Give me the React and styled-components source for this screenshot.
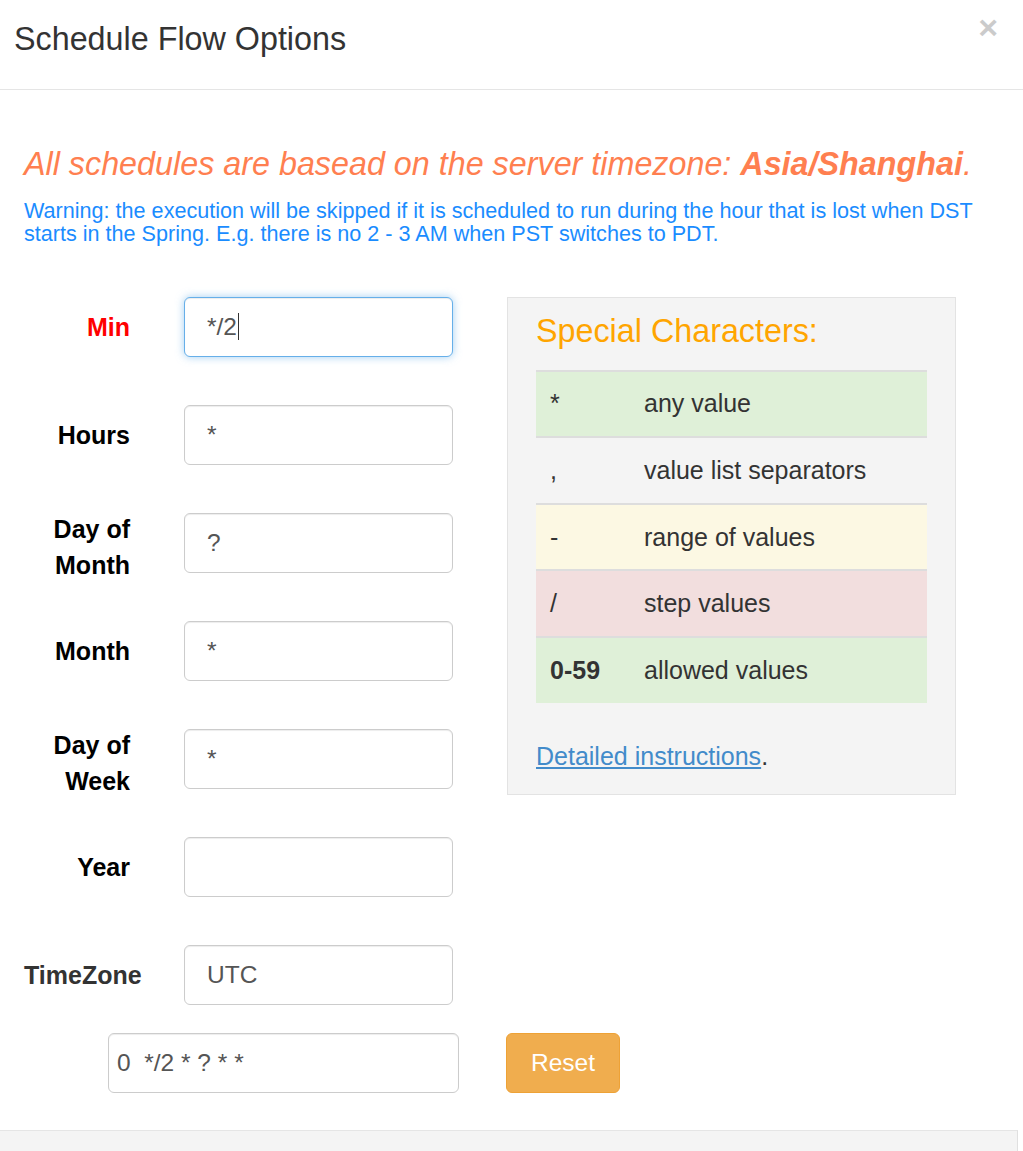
import React from "react";
import styled, { createGlobalStyle } from "styled-components";

const Global = createGlobalStyle`
  html, body { margin: 0; padding: 0; background: #fff; }
  body { font-family: "Liberation Sans", Arial, sans-serif; color: #333; }
  * { box-sizing: border-box; }
`;

const Modal = styled.div`
  width: 1023px;
  height: 1151px;
  background: #fff;
  overflow: hidden;
`;

const Header = styled.div`
  height: 90px;
  border-bottom: 1px solid #e5e5e5;
  display: flex;
  justify-content: space-between;
  align-items: flex-start;
  padding: 22px 25px 0 14px;
`;

const Title = styled.h4`
  margin: 0;
  font-size: 32.3px;
  line-height: 1.1;
  font-weight: 400;
  color: #333;
`;

const Close = styled.span`
  font-size: 34px;
  font-weight: 700;
  line-height: 1;
  color: #000;
  opacity: 0.2;
  margin-top: -12px;
`;

const Body = styled.div`
  padding: 57px 24px 0 24px;
`;

const Notice = styled.h4`
  margin: 0;
  font-size: 32.3px;
  line-height: 1.1;
  font-weight: 400;
  font-style: italic;
  color: #ff7f50;
  white-space: nowrap;
`;

const Warning = styled.p`
  margin: 16px 0 0 0;
  font-size: 21.6px;
  line-height: 1.1;
  color: #1a8cff;
  width: 960px;
`;

const Columns = styled.div`
  display: flex;
  align-items: flex-start;
  gap: 55px;
  margin-top: 51px;
`;

const FormCol = styled.div`
  display: flex;
  flex-direction: column;
  gap: 48px;
  width: 428px;
`;

const Row = styled.div`
  display: flex;
  align-items: center;
  gap: 54px;
  height: 60px;
`;

const Label = styled.label`
  width: 106px;
  flex: none;
  text-align: right;
  font-size: 25px;
  line-height: ${(p) => (p.$multi ? "36.5px" : "35px")};
  padding-top: ${(p) => (p.$multi ? "8px" : "0")};
  font-weight: 700;
  color: ${(p) => (p.$active ? "#ff0000" : p.$muted ? "#333" : "#000")};
  white-space: ${(p) => (p.$nowrap ? "nowrap" : "normal")};
`;

const FieldWrap = styled.div`
  position: relative;
  width: 269px;
  flex: none;
`;

const Input = styled.input`
  display: block;
  width: 100%;
  height: 60px;
  padding: 10px 22px;
  font-family: "Liberation Sans", Arial, sans-serif;
  font-size: 24.5px;
  color: #555;
  background: #fff;
  border: 1px solid ${(p) => (p.$focus ? "#66afe9" : "#ccc")};
  border-radius: 6px;
  box-shadow: ${(p) =>
    p.$focus
      ? "inset 0 1px 1px rgba(0,0,0,.075), 0 0 8px rgba(102,175,233,.6)"
      : "inset 0 1px 1px rgba(0,0,0,.075)"};
  outline: none;
`;

const Caret = styled.span`
  position: absolute;
  left: 54px;
  top: 16px;
  width: 1px;
  height: 27px;
  background: #333;
`;

const Panel = styled.div`
  width: 449px;
  background: #f4f4f4;
  border: 1px solid #e3e3e3;
  padding: 16px 28px 20px 28px;
`;

const PanelTitle = styled.h4`
  margin: 0;
  font-size: 32.3px;
  line-height: 1.1;
  font-weight: 400;
  color: #ffa500;
`;

const Table = styled.table`
  width: 391px;
  table-layout: fixed;
  border-collapse: collapse;
  margin-top: 20px;
  font-size: 25px;
  color: #333;
`;

const Col = styled.col`
  width: ${(p) => p.$w};
`;

const Tr = styled.tr`
  background: ${(p) => p.$bg || "transparent"};
  border-top: 2px solid #ddd;
`;

const Td = styled.td`
  padding: 14.8px 14px;
  line-height: 35px;
  vertical-align: top;
  font-weight: ${(p) => (p.$bold ? 700 : 400)};
`;

const LinkLine = styled.div`
  margin-top: 36px;
  font-size: 25px;
  line-height: 35px;
  color: #333;
`;

const Link = styled.a`
  color: #428bca;
  text-decoration: underline;
`;

const BottomRow = styled.div`
  display: flex;
  align-items: center;
  gap: 47px;
  margin: 28px 0 0 84px;
`;

const CronInput = styled(Input)`
  width: 351px;
  padding: 10px 8px;
`;

const Button = styled.button`
  width: 114px;
  height: 60px;
  background: #f0ad4e;
  border: 1px solid #eea236;
  border-radius: 6px;
  color: #fff;
  font-family: "Liberation Sans", Arial, sans-serif;
  font-size: 24.5px;
  padding: 0;
`;

const Footer = styled.div`
  margin-top: 37px;
  width: 1018px;
  height: 80px;
  background: #f4f4f4;
  border-top: 1px solid #e5e5e5;
  border-right: 1px solid #e0e0e0;
`;

const fields = [
  { label: "Min", value: "*/2", active: true },
  { label: "Hours", value: "*" },
  { label: "Day of Month", value: "?", multi: true },
  { label: "Month", value: "*" },
  { label: "Day of Week", value: "*", multi: true },
  { label: "Year", value: "" },
  { label: "TimeZone", value: "UTC", muted: true, nowrap: true },
];

const specials = [
  { c: "*", d: "any value", bg: "#dff0d8" },
  { c: ",", d: "value list separators" },
  { c: "-", d: "range of values", bg: "#fcf8e3" },
  { c: "/", d: "step values", bg: "#f2dede" },
  { c: "0-59", d: "allowed values", bg: "#dff0d8", bold: true },
];

export default function App() {
  return (
    <>
      <Global />
      <Modal>
        <Header>
          <Title>Schedule Flow Options</Title>
          <Close>×</Close>
        </Header>
        <Body>
          <Notice>
            All schedules are basead on the server timezone: <b>Asia/Shanghai</b>.
          </Notice>
          <Warning>
            Warning: the execution will be skipped if it is scheduled to run during the hour
            that is lost when DST starts in the Spring. E.g. there is no 2 - 3 AM when PST
            switches to PDT.
          </Warning>
          <Columns>
            <FormCol>
              {fields.map((f) => (
                <Row key={f.label}>
                  <Label
                    $active={f.active}
                    $muted={f.muted}
                    $nowrap={f.nowrap}
                    $multi={f.multi}
                  >
                    {f.label}
                  </Label>
                  <FieldWrap>
                    <Input $focus={f.active} value={f.value} readOnly />
                    {f.active && <Caret />}
                  </FieldWrap>
                </Row>
              ))}
            </FormCol>
            <Panel>
              <PanelTitle>Special Characters:</PanelTitle>
              <Table>
                <colgroup>
                  <Col $w="94px" />
                  <Col $w="297px" />
                </colgroup>
                <tbody>
                  {specials.map((s) => (
                    <Tr key={s.c} $bg={s.bg}>
                      <Td $bold={s.bold}>{s.c}</Td>
                      <Td>{s.d}</Td>
                    </Tr>
                  ))}
                </tbody>
              </Table>
              <LinkLine>
                <Link href="#">Detailed instructions</Link>.
              </LinkLine>
            </Panel>
          </Columns>
          <BottomRow>
            <CronInput value="0  */2 * ? * *" readOnly />
            <Button>Reset</Button>
          </BottomRow>
        </Body>
        <Footer />
      </Modal>
    </>
  );
}
